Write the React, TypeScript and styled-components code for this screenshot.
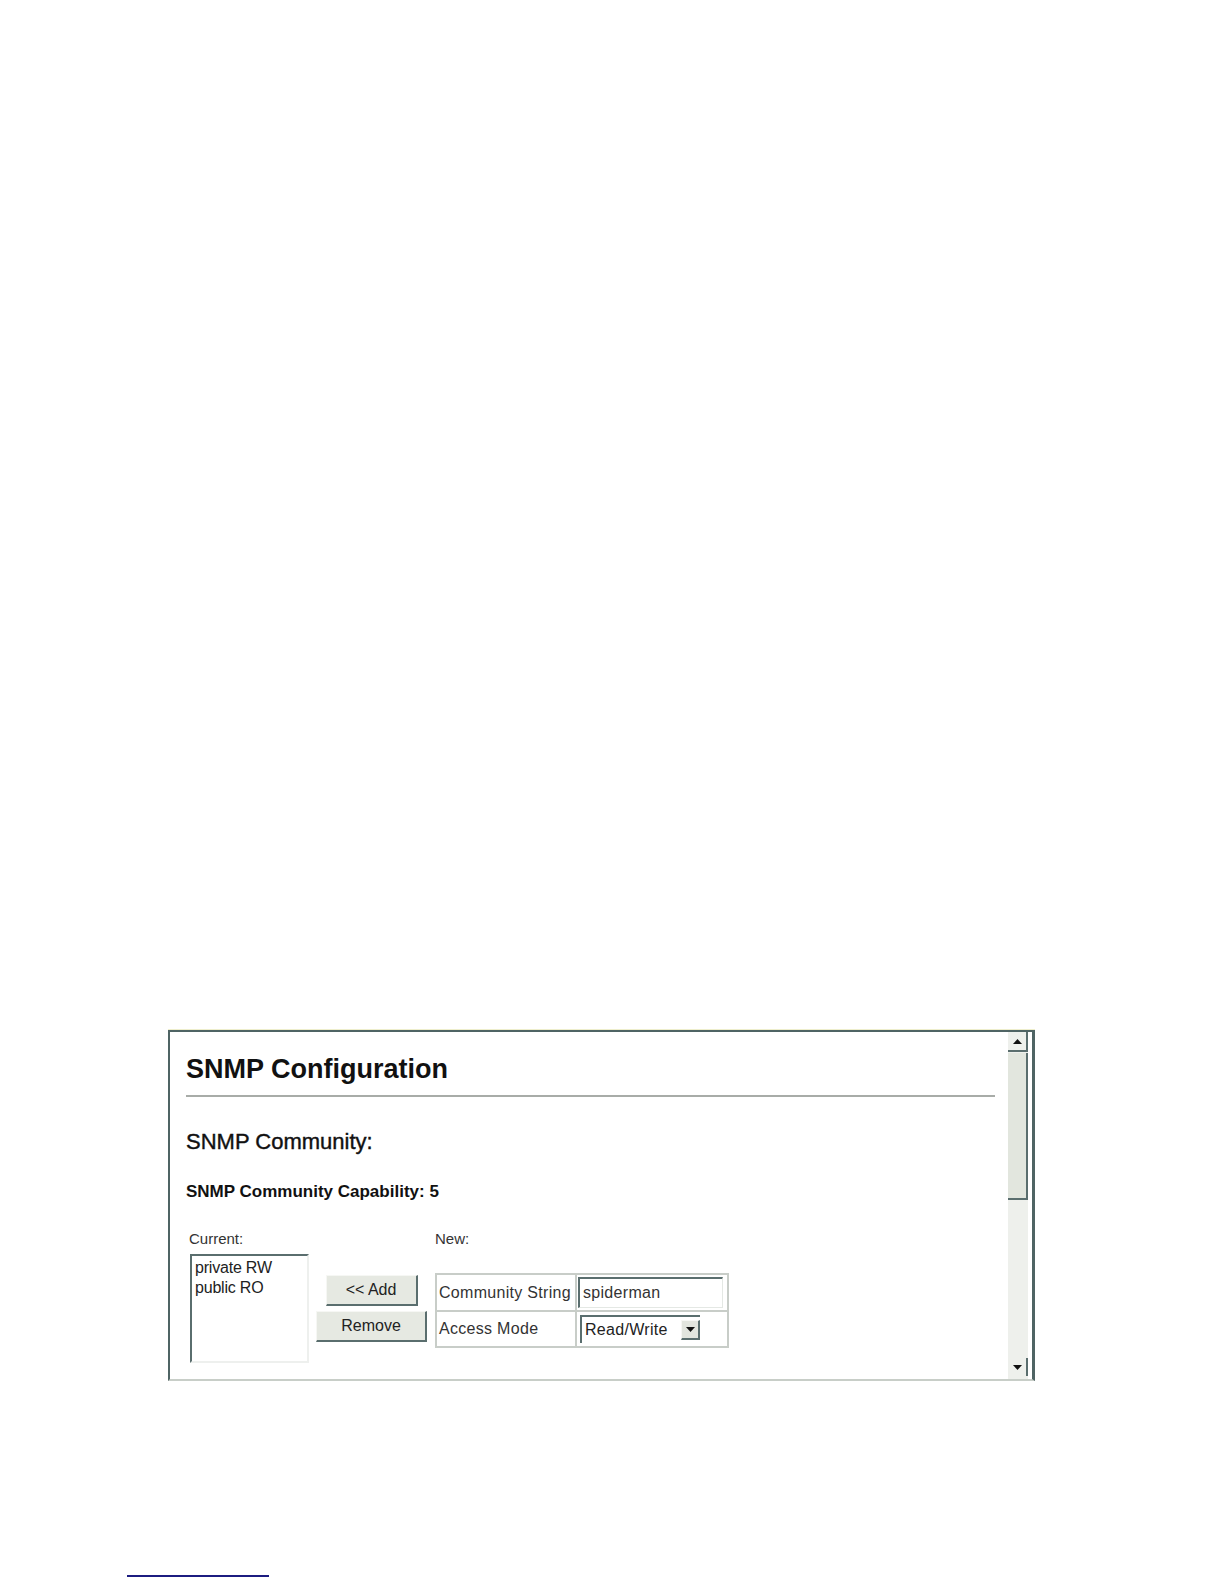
import styled, { createGlobalStyle } from 'styled-components';

const GlobalStyle = createGlobalStyle`
  html, body {
    margin: 0;
    padding: 0;
    background: #ffffff;
  }
  body {
    font-family: "Liberation Sans", Arial, sans-serif;
    color: #111;
  }
`;

const Page = styled.div`
  width: 1224px;
  height: 1584px;
  box-sizing: border-box;
  padding-top: 1029px;
  display: flex;
  flex-direction: column;
`;

const Frame = styled.div`
  margin-left: 168px;
  width: 867px;
  height: 352px;
  box-sizing: border-box;
  border-top: 1px solid #eeeecc;
`;

const Panel = styled.div`
  height: 100%;
  box-sizing: border-box;
  display: flex;
  border-top: 2px solid #4f6464;
  border-left: 2px solid #4f6464;
  border-right: 3px solid #4f6464;
  border-bottom: 2px solid #c8cec8;
  background: #fff;
  overflow: hidden;
`;

const Content = styled.div`
  flex: 1;
  padding: 22px 13px 0 16px;
  display: flex;
  flex-direction: column;
`;

const Title = styled.h1`
  margin: 0;
  font-size: 27px;
  line-height: 31px;
  font-weight: bold;
  color: #111;
`;

const Rule = styled.div`
  height: 2px;
  background: #a8aca8;
  margin-top: 10px;
`;

const Heading = styled.h2`
  margin: 32px 0 0;
  font-size: 22px;
  line-height: 26px;
  font-weight: normal;
  color: #111;
  -webkit-text-stroke: 0.4px #111;
`;

const Capability = styled.div`
  margin-top: 27px;
  font-size: 17px;
  line-height: 20px;
  font-weight: bold;
`;

const FormRow = styled.div`
  margin-top: 28px;
  display: flex;
  align-items: flex-start;
`;

const Column = styled.div<{ $pad?: number; $gap?: number }>`
  display: flex;
  flex-direction: column;
  padding-top: ${(p) => p.$pad ?? 0}px;
  margin-left: ${(p) => p.$gap ?? 0}px;
`;

const Label = styled.div`
  font-size: 15px;
  line-height: 18px;
  color: #333;
`;

const ListBox = styled.div`
  margin: 6px 0 0 1px;
  width: 119px;
  height: 109px;
  box-sizing: border-box;
  border-top: 2px solid #5a6e6e;
  border-left: 2px solid #5a6e6e;
  border-right: 2px solid #eef0ee;
  border-bottom: 2px solid #eef0ee;
  padding: 2px 3px;
`;

const ListItem = styled.div`
  font-size: 16px;
  line-height: 20px;
  letter-spacing: -0.2px;
  color: #222;
`;

const ButtonStack = styled.div`
  display: flex;
  flex-direction: column;
  align-items: center;
  gap: 5px;
  width: 111px;
`;

const Button = styled.button<{ $w: number }>`
  width: ${(p) => p.$w}px;
  height: 31px;
  box-sizing: border-box;
  background: #e6e9e2;
  border-top: 1px solid #f6f7f4;
  border-left: 1px solid #f6f7f4;
  border-right: 2px solid #5a6e6e;
  border-bottom: 2px solid #5a6e6e;
  font-family: "Liberation Sans", Arial, sans-serif;
  font-size: 16px;
  color: #222;
  padding: 0;
`;

const Table = styled.table`
  margin-top: 25px;
  border-collapse: collapse;
  border: 2px solid #c8cdc8;
`;

const Cell = styled.td<{ $w: number; $h: number }>`
  width: ${(p) => p.$w}px;
  height: ${(p) => p.$h}px;
  box-sizing: border-box;
  border: 2px solid #c8cdc8;
  padding: 0 0 0 2px;
  font-size: 16px;
  letter-spacing: 0.3px;
  color: #333;
  vertical-align: middle;
`;

const TextInput = styled.div`
  margin-left: -1px;
  width: 145px;
  height: 31px;
  box-sizing: border-box;
  border-top: 2px solid #5a6e6e;
  border-left: 2px solid #5a6e6e;
  border-right: 1px solid #e4e8e4;
  border-bottom: 1px solid #e4e8e4;
  padding: 5px 0 0 3px;
  font-size: 16px;
  color: #333;
`;

const Select = styled.div`
  margin-left: 1px;
  width: 120px;
  height: 28px;
  box-sizing: border-box;
  border-top: 2px solid #5a6e6e;
  border-left: 2px solid #5a6e6e;
  display: flex;
  align-items: center;
  justify-content: space-between;
  padding: 0 0 0 3px;
  font-size: 16px;
  color: #222;
`;

const SelectArrow = styled.div`
  width: 19px;
  height: 20px;
  box-sizing: border-box;
  background: #e2e5de;
  border-top: 1px solid #f6f7f4;
  border-left: 1px solid #f6f7f4;
  border-right: 2px solid #5a6e6e;
  border-bottom: 2px solid #5a6e6e;
  display: flex;
  align-items: center;
  justify-content: center;
`;

const Scrollbar = styled.div`
  width: 20px;
  margin-right: 4px;
  display: flex;
  flex-direction: column;
  background: #eef0ec;
`;

const ScrollButton = styled.div<{ $down?: boolean }>`
  height: 18px;
  flex: none;
  display: flex;
  align-items: center;
  justify-content: center;
  background: #eef0ec;
  border-right: 2px solid #5a6e6e;
  ${(p) => (p.$down ? 'margin-top: auto; margin-bottom: 3px;' : 'border-bottom: 2px solid #5a6e6e;')}
`;

const Thumb = styled.div`
  height: 145px;
  margin-top: 1px;
  background: #e2e6de;
  border-right: 2px solid #5a6e6e;
  border-bottom: 2px solid #5a6e6e;
`;

const Footnote = styled.div`
  margin: 194px 0 0 127px;
  width: 142px;
  height: 2px;
  background: #1c1c80;
`;

const Triangle = ({ down }: { down?: boolean }) => (
  <svg width="9" height="5" viewBox="0 0 9 5">
    <path d={down ? 'M0 0 L9 0 L4.5 5 Z' : 'M0 5 L9 5 L4.5 0 Z'} fill="#111" />
  </svg>
);

export default function App() {
  return (
    <>
      <GlobalStyle />
      <Page>
        <Frame>
          <Panel>
            <Content>
              <Title>SNMP Configuration</Title>
              <Rule />
              <Heading>SNMP Community:</Heading>
              <Capability>SNMP Community Capability: 5</Capability>
              <FormRow>
                <Column $gap={3}>
                  <Label>Current:</Label>
                  <ListBox>
                    <ListItem>private RW</ListItem>
                    <ListItem>public RO</ListItem>
                  </ListBox>
                </Column>
                <Column $pad={45} $gap={7}>
                  <ButtonStack>
                    <Button $w={92}>&lt;&lt; Add</Button>
                    <Button $w={111}>Remove</Button>
                  </ButtonStack>
                </Column>
                <Column $gap={8}>
                  <Label>New:</Label>
                  <Table>
                    <tbody>
                      <tr>
                        <Cell $w={140} $h={37}>Community String</Cell>
                        <Cell $w={152} $h={37}>
                          <TextInput>spiderman</TextInput>
                        </Cell>
                      </tr>
                      <tr>
                        <Cell $w={140} $h={36}>Access Mode</Cell>
                        <Cell $w={152} $h={36}>
                          <Select>
                            Read/Write
                            <SelectArrow>
                              <Triangle down />
                            </SelectArrow>
                          </Select>
                        </Cell>
                      </tr>
                    </tbody>
                  </Table>
                </Column>
              </FormRow>
            </Content>
            <Scrollbar>
              <ScrollButton>
                <Triangle />
              </ScrollButton>
              <Thumb />
              <ScrollButton $down>
                <Triangle down />
              </ScrollButton>
            </Scrollbar>
          </Panel>
        </Frame>
        <Footnote />
      </Page>
    </>
  );
}
